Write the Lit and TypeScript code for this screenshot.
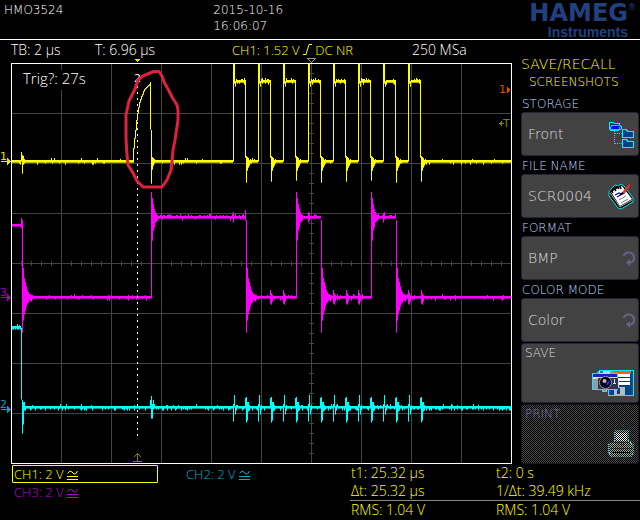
import { LitElement, html, svg, css } from "lit";
import { customElement } from "lit/decorators.js";

type Span = [top: number, bottom: number];
type Trace = Map<number, Span>;

/* Plot area inside the frame, in drawing units. */
const LEFT = 12;
const RIGHT = 511;

function noise(seed: number): () => number {
  let s = seed * 7919;
  return () => {
    s = (s * 16807) % 2147483647;
    return s / 2147483647;
  };
}

function level(t: Trace, from: number, to: number, y: number, rand: () => number, up: number, down: number) {
  for (let x = from; x < to; x++) {
    const a = rand() < up ? 1 : 0;
    const b = rand() < down ? 1 : 0;
    t.set(x, [y - a * (rand() < 0.3 ? 2 : 1), y + 3 + b * (rand() < 0.4 ? 2 : 1)]);
  }
}

function put(t: Trace, x: number, spans: Span[]) {
  spans.forEach((s, i) => t.set(x + i, s));
}

function toPath(t: Trace, trim: number): string {
  let d = "";
  t.forEach(([a, b], x) => {
    d += `M${x} ${a}h1V${b - trim}h-1z`;
  });
  return d;
}

function channel1(): Trace {
  const t: Trace = new Map();
  const r = noise(7);
  level(t, LEFT, RIGHT, 160, r, 0.04, 0.12);
  put(t, 21, [[152, 162], [155, 174], [156, 165], [159, 164]]);
  const rise = [148, 138, 130, 120, 113, 107, 102, 99, 96, 94, 91, 89, 88, 87, 86, 85, 84];
  let prev = 163;
  rise.forEach((y, i) => {
    t.set(133 + i, [y, Math.max(prev, y + 2)]);
    prev = y + 1;
  });
  put(t, 150, [[82, 130], [130, 184], [157, 170], [158, 166], [159, 164]]);
  for (let k = 0; k < 8; k++) {
    const x = 233 + 25 * k;
    level(t, x + 2, x + 12, 80, r, 0.4, 0.3);
    put(t, x, [[64, 162], [64, 84], [81, 87]]);
    put(t, x + 12, [[80, 158], [156, 183 - (k % 3)], [157, 171], [158, 168], [160, 166], [159, 164]]);
  }
  return t;
}

function channel3(): Trace {
  const t: Trace = new Map();
  const r = noise(19);
  const low = (x: number, to: number) => level(t, x, to, 296, r, 0.08, 0.12);
  const high = (x: number, to: number) => level(t, x, to, 216, r, 0.3, 0.05);
  const fall = (x: number, start: number) =>
    put(t, x, [[start, 333], [268, 321], [278, 315], [282, 311], [286, 307], [290, 304], [292, 303], [294, 301], [294, 301], [295, 302], [295, 300]]);
  const climb = (x: number) =>
    put(t, x, [[192, 299], [198, 241], [204, 231], [209, 228], [212, 223], [214, 222], [215, 221]]);
  level(t, LEFT, 21, 224, r, 0.05, 0.1);
  low(22, 151);
  high(151, 246);
  low(246, 296);
  high(296, 321);
  low(321, 371);
  high(371, 396);
  low(396, RIGHT);
  t.set(21, [218, 229]);
  t.set(245, [210, 221]);
  [22, 246, 321, 396].forEach((x) => fall(x, 220));
  [151, 296, 371].forEach(climb);
  put(t, 233, [[212, 223]]);
  put(t, 308, [[212, 223], [213, 221]]);
  put(t, 383, [[213, 223], [212, 220]]);
  [270, 283, 333, 346, 358, 408, 421].forEach((x) => put(t, x, [[290, 304], [293, 305], [295, 302]]));
  return t;
}

function channel2(): Trace {
  const t: Trace = new Map();
  const r = noise(31);
  level(t, LEFT, 21, 326, r, 0.3, 0.3);
  level(t, 21, RIGHT, 406, r, 0.08, 0.34);
  put(t, 21, [[328, 400], [400, 434], [402, 425], [402, 411], [406, 411]]);
  put(t, 150, [[400, 409], [396, 419], [404, 419], [400, 410]]);
  for (let k = 0; k < 8; k++) {
    const x = 233 + 25 * k;
    put(t, x, [[404, 422], [395, 408], [406, 415], [405, 411]]);
    put(t, x + 12, [[398, 409], [397, 423], [402, 421], [402, 412], [405, 411]]);
  }
  return t;
}

const TRACES = [
  { name: "ch3", data: channel3() },
  { name: "ch1", data: channel1() },
  { name: "ch2", data: channel2() },
];

function graticule(): string {
  let d = "";
  for (let i = 1; i < 10; i++) d += `M${11 + 50 * i} 64h1v399h-1z`;
  for (let i = 1; i < 8; i++) d += `M12 ${63 + 50 * i}h499v1h-499z`;
  for (let x = 21; x < 511; x += 10) d += `M${x} 261h1v5h-1z`;
  for (let y = 73; y < 463; y += 10) d += `M309 ${y}h5v1h-5z`;
  return d;
}

@customElement("scope-screen")
class ScopeScreen extends LitElement {
  static styles = css`
    :host { display: block; }
    .plot { display: block; width: 100%; height: auto; font-family: "DejaVu Sans", sans-serif; font-weight: 400; shape-rendering: crispEdges; }
    .grid { fill: #444; }
    .frame { fill: none; stroke: #fff; }
    .ch1 { fill: #ff0; }
    .ch1.dim { fill: #b4b400; }
    .ch2 { fill: #0ff; }
    .ch2.dim { fill: #009c9c; }
    .ch3 { fill: #f0f; }
    .ch3.dim { fill: #a800a8; }
    .cursor { stroke: #fff; stroke-dasharray: 2 4; }
    .note { fill: #fff; font: 300 15px "Open Sans", sans-serif; }
    .mark { font-size: 11px; }
    .back { fill: #000; }
    .m0 { fill: #fff; }
    .m1 { fill: #e8e800; }
    .m2 { fill: #00a0c8; }
    .m3 { fill: #a000c0; }
    .hot { fill: #f04800; }
    .olive { fill: #808000; }
    .olive-line { fill: none; stroke: #808000; }
    .centre { fill: #000; stroke: #999; }
    .ring { fill: none; stroke: #e02040; stroke-width: 3; stroke-linejoin: round; shape-rendering: auto; }
  `;

  render() {
    return html`
      <svg class="plot" viewBox="0 58 512 406" role="img" aria-label="Oscilloscope traces">
        <path class="grid" d=${graticule()} />
        <rect class="back" x="18" y="70" width="76" height="20" />
        <rect class="frame" x="11.5" y="63.5" width="500" height="400" />
        ${TRACES.map(
          (t) => svg`
            <path class="${t.name} dim" d=${toPath(t.data, 0)} />
            <path class=${t.name} d=${toPath(t.data, 1)} />`
        )}
        <path class="cursor" d="M137.5 86V440" />
        <text class="note" x="23" y="84">Trig?: 27s</text>
        <text class="m0 mark" x="134" y="82">2</text>
        <path class="olive-line" d="M133 461.5h9M137.5 461V453M133.500 457.500l4-4 4 4" />
        <path class="m1" d="M135 59h5v1h-1v1h-1v1h-1v-1h-1v-1h-1z" />
        <path class="centre" d="M307.5 58.5h8l-4 4z" />
        <text class="m1 mark" x="0" y="160">1</text>
        <path class="m1" d="M1 161h6v-3l4 3.5l-4 3.5v-3h-6z" />
        <text class="m3 mark" x="0" y="296">3</text>
        <path class="m3" d="M1 297h6v-3l4 3.500l-4 3.500v-3h-6z" />
        <text class="m2 mark" x="0" y="408">2</text>
        <path class="m2" d="M1 409h6v-3l4 3.500l-4 3.500v-3h-6z" />
        <text class="hot mark" x="499" y="93">1</text>
        <path class="hot" d="M507 87l3.500 3l-3.500 3z" />
        <path class="olive" d="M499 123.500l3-3v2.500h2v1h-2v2.500z" />
        <text class="olive mark" x="503" y="127">T</text>
        <path class="ring" d="M150 73L154 71.500H159L162 76L164 82L168 89L172 97L177 105L178 110V120L175 140L173 150L172 162L171 170L167 180L162 187H143L137 181L133 173L128 165L127 155L126 138V115L129 101L135 89L138 80L143 76Z" />
      </svg>
    `;
  }
}

const folderIcon = svg`
  <svg class="icon" viewBox="0 0 26 27" width="26" height="27" aria-hidden="true" shape-rendering="crispEdges">
    <path d="M1 8V1h4l1 1h5v3h2v3l-2 1H2z" fill="#004080" stroke="#00f0ff" />
    <path d="M2 8l2-4h9l-2 4z" fill="#0000ff" stroke="#00c8ff" />
    <path d="M6.500 10v14M7 12.500h7M7 22.500h7" fill="none" stroke="#00d8ff" stroke-dasharray="1 1" />
    <path d="M14.500 8.500h4l1 2h6v6h-11z" fill="#004080" stroke="#00f0ff" />
    <path d="M14.500 18.500h4l1 2h6v5.500h-11z" fill="#004080" stroke="#00f0ff" />
  </svg>`;

const notepadIcon = svg`
  <svg class="icon" viewBox="0 0 26 27" width="26" height="27" aria-hidden="true">
    <path d="M1 9L4 5l3-3 3 1 3-2 4 3 8 11v4L13 26l-3-1L1 13z" fill="#000" stroke="#00e8f0" />
    <path d="M3 9l11-6 10 13-12 7z" fill="#fff" />
    <path d="M2 10l10 14 12-7" fill="none" stroke="#aaa" />
    <path d="M3 7l2 3M6 5l2 3M9 3l2 3M12 3l1 3" stroke="#000" stroke-width="1.500" />
    <path d="M7 12l4-2 2 1M9 14l5-3" fill="none" stroke="#00c" stroke-width="1.200" />
    <path d="M11 17l7-4M13 20l7-4" stroke="#777" />
    <path d="M14 10l7-9 2 1-7 9z" fill="#f03820" stroke="#902010" stroke-width=".5" />
    <path d="M11 13l3-4 2 2z" fill="#000" />
  </svg>`;

const cycleIcon = svg`
  <svg class="icon" viewBox="0 0 14 15" width="14" height="15" aria-hidden="true">
    <path d="M1.500 5C3 1 7 .8 9.500 2.200C13 4.500 13 10 9 11.500H6" fill="none" stroke="#62628c" stroke-width="2" />
    <path d="M4 11.500l4-3.500v7z" fill="#62628c" />
  </svg>`;

const cameraIcon = svg`
  <svg class="icon" viewBox="0 0 42 27" width="42" height="27" aria-hidden="true" shape-rendering="crispEdges">
    <path d="M17 1.500h24.500v25h-25v-6" fill="#004488" stroke="#00f0ff" />
    <rect x="19" y="2" width="20" height="3" fill="#f06020" />
    <rect x="23" y="5" width="15" height="11" fill="#fff" />
    <path d="M23 8.500h15M23 12.500h15" stroke="#003880" />
    <path d="M22 18h11v8h-11z" fill="#bbb" />
    <path d="M25 19h3v6h-3z" fill="#004488" />
    <path d="M.5 20.500V4.500h4l3-3h11l3 3h4v16h-11v2h-4v-2z" fill="#999" stroke="#00f0ff" />
    <path d="M1 5h24v3h-24z" fill="#2020c0" />
    <path d="M1 8h24v2h-24z" fill="#ddd" />
    <path d="M7 2h11v3h-11z" fill="#ccc" />
    <path d="M8 2h3v2h-3z" fill="#008ca0" />
    <path d="M6 9h20v11h-20z" fill="#303050" />
    <path d="M22.500 10v4M21 14.500h3M26.500 10v8" stroke="#ddd" />
    <g shape-rendering="auto">
      <circle cx="13.500" cy="13.500" r="6" fill="#000" stroke="#999" />
      <circle cx="12.500" cy="12" r="2" fill="#bbb" />
      <path d="M15 16l2-4" stroke="#22f" stroke-width="2" />
    </g>
  </svg>`;

const printerIcon = svg`
  <svg class="icon" viewBox="0 0 26 27" width="26" height="27" aria-hidden="true" shape-rendering="crispEdges">
    <defs>
      <pattern id="dots" width="2" height="2" patternUnits="userSpaceOnUse">
        <path d="M0 0h1v1h-1zM1 1h1v1h-1z" fill="#000" />
      </pattern>
    </defs>
    <path d="M6.500 10.500V.5h14v10l5 4v7l-2 5H2.500l-2-5v-7z" fill="#9ab098" />
    <path d="M8 3h11v8h-11z" fill="#fff" />
    <path d="M5 12h17" stroke="#555" />
    <path d="M13 14h4v1h-4z" fill="#e02020" />
    <path d="M2 18h22" stroke="#555" />
    <rect width="26" height="27" fill="url(#dots)" />
    <path d="M5 22h17v1h-17z" fill="#000" />
    <path d="M6.500 10.500V.5h14v10l5 4v7l-2 5H2.500l-2-5v-7z" fill="none" stroke="#00e8f0" stroke-dasharray="1 1" />
  </svg>`;

@customElement("soft-menu")
class SoftMenu extends LitElement {
  static styles = css`
    :host { display: block; padding: 15px 1px 0 9px; font: 200 12px/18px "DejaVu Sans", sans-serif; }
    .title { margin: 0; color: #ff0; font-size: 14px; font-weight: 200; line-height: 18px; }
    .subtitle { margin: 0 0 3px; padding-left: 8px; color: #ff0; }
    .caption { display: block; padding-left: 1px; color: #b8d8ff; line-height: 20px; height: 18px; }
    .key {
      box-sizing: border-box; display: flex; align-items: center; justify-content: space-between;
      width: 100%; height: 44px; margin: 0; padding: 0 4px 0 6px;
      border: 1px solid #24243c; border-radius: 3px; background: #424242; color: #dcdcdc;
      font: inherit; font-size: 14px; text-align: left;
    }
    .key.cycle { padding-right: 2px; }
    .key.action { height: 60px; margin-top: 1px; padding: 0 4px 6px 3px; font-size: 12px; }
    .key.action .text { align-self: flex-start; }
    .key.action .icon { align-self: flex-end; }
    .key:disabled {
      border-color: #181820; color: #7474ac;
      background: repeating-conic-gradient(#000 0 25%, #484848 0 50%) 0 0 / 2px 2px;
    }
  `;

  render() {
    return html`
      <h1 class="title">SAVE/RECALL</h1>
      <p class="subtitle">SCREENSHOTS</p>
      <label class="caption" for="storage">STORAGE</label>
      <button class="key" id="storage"><span>Front</span>${folderIcon}</button>
      <label class="caption" for="file">FILE NAME</label>
      <button class="key" id="file"><span>SCR0004</span>${notepadIcon}</button>
      <label class="caption" for="format">FORMAT</label>
      <button class="key cycle" id="format"><span>BMP</span>${cycleIcon}</button>
      <label class="caption" for="mode">COLOR MODE</label>
      <button class="key cycle" id="mode"><span>Color</span>${cycleIcon}</button>
      <button class="key action"><span class="text">SAVE</span>${cameraIcon}</button>
      <button class="key action" disabled><span class="text">PRINT</span>${printerIcon}</button>
    `;
  }
}

@customElement("app-root")
class AppRoot extends LitElement {
  static styles = css`
    :host { display: block; min-height: 100vh; background: #000; color: #fff; font: 300 14px/18px "Open Sans", "Noto Sans", sans-serif; }
    .top { display: grid; grid-template-columns: 1fr 1fr 1fr; height: 39px; border-bottom: 1px solid #fff; font: 200 12px/16px "DejaVu Sans", sans-serif; }
    .model { padding: 2px 0 0 4px; }
    .clock { padding-top: 2px; }
    .brand { display: grid; justify-items: end; align-content: start; padding-right: 4px; color: #204080; font-weight: 700; }
    .name { display: flex; font-size: 24px; line-height: 26px; }
    .reg { font-size: 8px; line-height: 16px; font-weight: 400; }
    .sub { padding-right: 8px; font-family: "Liberation Sans", sans-serif; font-size: 14px; line-height: 12px; }
    .body { display: grid; grid-template-columns: minmax(0, 1fr) 128px; }
    .status { display: grid; grid-template-columns: 84fr 137fr 180fr 100fr; height: 18px; padding-left: 11px; line-height: 20px; white-space: nowrap; }
    .yellow { color: #ff0; }
    .narrow { font-size: 13px; }
    .foot { display: grid; grid-template-columns: 338fr 290fr; padding-left: 12px; white-space: nowrap; }
    .channels { display: grid; grid-template-columns: 146px 1fr; column-gap: 26px; align-content: start; font-size: 13px; }
    .chan { box-sizing: border-box; height: 18px; padding-left: 1px; border: 1px solid transparent; line-height: 16px; }
    .chan.one { border-color: #ff0; border-radius: 1px; color: #ff0; margin-top: 1px; }
    .chan.two { color: #00acd4; margin-top: 1px; }
    .chan.three { color: #b800dc; }
    .coupling { vertical-align: -2px; }
    .measures { display: grid; grid-template-columns: 1fr 1fr; color: #ff0; line-height: 18px; }
    .measures span { padding-left: 1px; }
    .rule { grid-column: 1 / -1; height: 1px; background: #888; }
  `;

  private coupling() {
    return svg`
      <svg class="coupling" width="11" height="12" viewBox="0 0 11 12" role="img" aria-label="AC">
        <path d="M.5 4.500L3 2l2 1 2 2 1.500 0L10.500 2M0 7.500h11M0 10.500h11" fill="none" stroke="currentColor" />
      </svg>`;
  }

  render() {
    return html`
      <header class="top">
        <div class="model">HMO3524</div>
        <div class="clock">2015-10-16<br />16:06:07</div>
        <div class="brand">
          <span class="name">HAMEG<span class="reg">®</span></span>
          <span class="sub">Instruments</span>
        </div>
      </header>
      <main class="body">
        <section>
          <div class="status">
            <span>TB: 2 µs</span>
            <span>T: 6.96 µs</span>
            <span class="yellow narrow">CH1: 1.52 V
              <svg width="9" height="11" viewBox="0 0 9 11" role="img" aria-label="rising edge"><path d="M0 10.500h3L6 .5h3" fill="none" stroke="currentColor" /></svg>
              DC NR</span>
            <span>250 MSa</span>
          </div>
          <scope-screen></scope-screen>
        </section>
        <soft-menu></soft-menu>
      </main>
      <footer class="foot">
        <div class="channels">
          <span class="chan one">CH1: 2 V ${this.coupling()}</span>
          <span class="chan two">CH2: 2 V ${this.coupling()}</span>
          <span class="chan three">CH3: 2 V ${this.coupling()}</span>
        </div>
        <div class="measures">
          <span>t1: 25.32 µs</span><span>t2: 0 s</span>
          <span>Δt: 25.32 µs</span><span>1/Δt: 39.49 kHz</span>
          <i class="rule"></i>
          <span>RMS: 1.04 V</span><span>RMS: 1.04 V</span>
        </div>
      </footer>
    `;
  }
}
